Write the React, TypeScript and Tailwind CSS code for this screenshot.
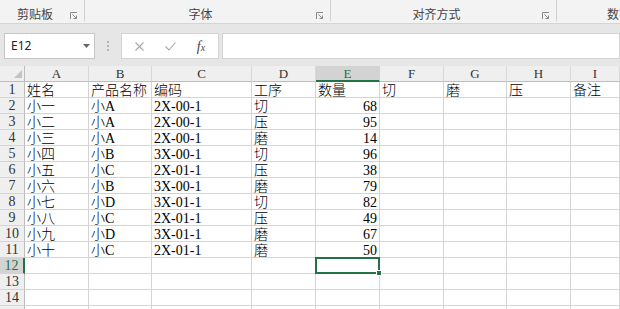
import React from "react";

const letters = ["A", "B", "C", "D", "E", "F", "G", "H", "I"];

const data: (string | number)[][] = [
  ["姓名", "产品名称", "编码", "工序", "数量", "切", "磨", "压", "备注"],
  ["小一", "小A", "2X-00-1", "切", 68],
  ["小二", "小A", "2X-00-1", "压", 95],
  ["小三", "小A", "2X-00-1", "磨", 14],
  ["小四", "小B", "3X-00-1", "切", 96],
  ["小五", "小C", "2X-01-1", "压", 38],
  ["小六", "小B", "3X-00-1", "磨", 79],
  ["小七", "小D", "3X-01-1", "切", 82],
  ["小八", "小C", "2X-01-1", "压", 49],
  ["小九", "小D", "3X-01-1", "磨", 67],
  ["小十", "小C", "2X-01-1", "磨", 50],
  [],
  [],
  [],
  [],
];

const cellFont = { fontFamily: '"Liberation Serif", "Noto Sans CJK SC", serif' };

function Launcher() {
  return (
    <svg width="8" height="8" viewBox="0 0 8 8" className="text-[#8a8a8a]">
      <path d="M0.5 7V0.5H7" fill="none" stroke="currentColor" />
      <path d="M2.5 2.5L6.5 6.5M6.5 3.5V6.5H3.5" fill="none" stroke="currentColor" />
    </svg>
  );
}

function RibbonGroup({ label, width, last }: { label: string; width: string; last?: boolean }) {
  return (
    <div className={`flex h-[21px] flex-none items-center ${width} ${last ? "" : "border-r border-[#d1d1d1]"}`}>
      <div className="flex flex-1 justify-center pt-[6px] text-[12px] leading-[14px] text-[#444]">{label}</div>
      <div className="flex w-[14px] justify-start pt-[11px]">
        <Launcher />
      </div>
    </div>
  );
}

export default function App() {
  return (
    <div
      className="h-[309px] w-[620px] overflow-hidden bg-white"
      style={{ fontFamily: '"Noto Sans CJK SC", "Noto Sans", sans-serif' }}
    >
      {/* Ribbon group labels */}
      <div className="flex h-[24px] overflow-hidden border-b border-[#d5d5d5] bg-[#f3f3f3]">
        <RibbonGroup label="剪贴板" width="w-[85px]" />
        <RibbonGroup label="字体" width="w-[246px]" />
        <RibbonGroup label="对齐方式" width="w-[226px]" />
        <RibbonGroup label="数字" width="w-[138px]" last />
      </div>

      {/* Formula bar */}
      <div className="flex h-[42px] items-start bg-[#e6e6e6] pt-[9px]">
        <div className="ml-[4px] flex h-[26px] w-[91px] items-center justify-between border border-[#c6c6c6] bg-white pl-[6px] pr-[4px]">
          <span className="text-[12px] text-[#222]" style={{ fontFamily: '"Noto Sans", sans-serif' }}>
            E12
          </span>
          <svg width="7" height="4" viewBox="0 0 7 4">
            <path d="M0 0H7L3.5 4Z" fill="#666" />
          </svg>
        </div>
        <div className="flex w-[26px] flex-col items-center justify-center gap-[2px] pt-[8px]">
          <div className="h-[2px] w-[2px] bg-[#b5b5b5]" />
          <div className="h-[2px] w-[2px] bg-[#b5b5b5]" />
          <div className="h-[2px] w-[2px] bg-[#b5b5b5]" />
        </div>
        <div className="flex h-[26px] w-[98px] items-center border border-[#d4d4d4] bg-white">
          <div className="flex w-[32px] justify-center pl-[2px]">
            <svg width="9" height="9" viewBox="0 0 9 9">
              <path d="M0.5 0.5L8.5 8.5M8.5 0.5L0.5 8.5" stroke="#a8a8a8" strokeWidth="1.1" />
            </svg>
          </div>
          <div className="flex w-[32px] justify-center">
            <svg width="11" height="9" viewBox="0 0 11 9">
              <path d="M0.5 4.5L4 8L10.5 0.5" fill="none" stroke="#a8a8a8" strokeWidth="1.1" />
            </svg>
          </div>
          <div className="flex w-[30px] justify-center">
            <span className="italic text-[#444]" style={{ fontFamily: '"Liberation Serif", serif' }}>
              <span className="text-[14px]">f</span>
              <span className="text-[10px]">x</span>
            </span>
          </div>
        </div>
        <div className="ml-[3px] h-[26px] flex-1 border border-[#d4d4d4] bg-white" />
      </div>

      {/* Sheet grid */}
      <div className="grid grid-cols-[25px_64px_63px_100px_64px_64px_64px_63px_64px_49px]" style={cellFont}>
        {/* corner */}
        <div className="flex h-4 items-end justify-end border-b border-r border-[#bdbdbd] bg-[#efefef] pb-[3px] pr-[2px]">
          <svg width="8" height="8" viewBox="0 0 8 8">
            <path d="M8 0V8H0Z" fill="#c3c3c3" />
          </svg>
        </div>
        {letters.map((l) =>
          l === "E" ? (
            <div
              key={l}
              className="h-4 border-b-2 border-r border-b-[#217346] border-r-[#d4d4d4] bg-[#d3d3d3] text-center text-[13px] leading-[15px] text-[#217346]"
            >
              {l}
            </div>
          ) : (
            <div
              key={l}
              className="h-4 border-b border-r border-b-[#bdbdbd] border-r-[#d8d8d8] bg-[#efefef] text-center text-[13px] leading-[15px] text-[#333]"
            >
              {l}
            </div>
          )
        )}

        {data.map((row, r) => {
          const n = r + 1;
          const sel = n === 12;
          return (
            <React.Fragment key={n}>
              <div
                className={
                  sel
                    ? "h-4 border-b border-r-2 border-b-[#d4d4d4] border-r-[#217346] bg-[#d3d3d3] text-center text-[14px] leading-4 text-[#217346]"
                    : "h-4 border-b border-r border-b-[#d4d4d4] border-r-[#bdbdbd] bg-[#efefef] text-center text-[14px] leading-4 text-[#333]"
                }
              >
                {n < 15 ? n : ""}
              </div>
              {letters.map((l, c) => {
                const v = row[c];
                const isNum = typeof v === "number";
                return (
                  <div
                    key={l}
                    className={`relative h-4 overflow-visible whitespace-nowrap border-b border-r border-[#d4d4d4] px-[2px] pt-px text-[14px] font-light leading-[15px] text-black ${
                      isNum ? "text-right" : "text-left"
                    }`}
                  >
                    {v}
                    {sel && l === "E" && (
                      <div className="absolute -bottom-px -left-px -right-px -top-px z-10 border-2 border-[#217346]">
                        <div className="absolute -bottom-[4px] -right-[4px] h-[6px] w-[6px] border border-white bg-[#217346]" />
                      </div>
                    )}
                  </div>
                );
              })}
            </React.Fragment>
          );
        })}
      </div>
    </div>
  );
}
